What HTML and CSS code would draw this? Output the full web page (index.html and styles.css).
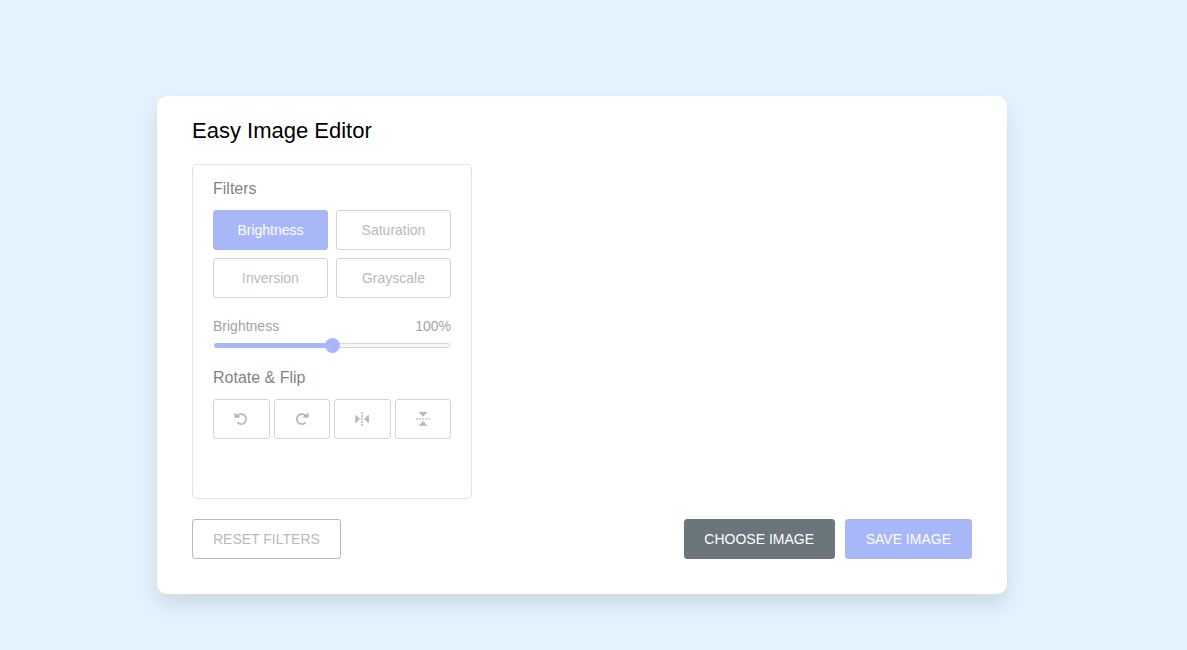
FILE: index.html
```html
<!DOCTYPE html>
<html lang="en">
<head>
<meta charset="utf-8">
<title>Easy Image Editor</title>
<link rel="stylesheet" href="styles.css">
</head>
<body>
<main class="container">
  <h2 class="heading">Easy Image Editor</h2>
  <section class="panel">
    <div class="panel-body">
      <h3 class="label">Filters</h3>
      <div class="filters">
        <button class="option active">Brightness</button>
        <button class="option">Saturation</button>
        <button class="option">Inversion</button>
        <button class="option">Grayscale</button>
      </div>
      <div class="slider">
        <div class="slider-info"><span>Brightness</span><span>100%</span></div>
        <input class="range" type="range" min="0" max="200" value="100" aria-label="Brightness">
      </div>
      <h3 class="label">Rotate &amp; Flip</h3>
      <div class="rotate">
        <button class="option" aria-label="Rotate left"><svg class="icon" viewBox="0 0 14 14"><path class="stroke" d="M3 4.3A5 5 0 1 1 3.4 10.4"/><path d="M.3 .6L2.2 2.2 4.4 2.6 6 5.8H.3z"/></svg></button>
        <button class="option" aria-label="Rotate right"><svg class="icon" viewBox="0 0 14 14"><path class="stroke" d="M11 4.3A5 5 0 1 0 10.6 10.4"/><path d="M13.7 .6L11.8 2.2 9.6 2.6 8 5.8h5.7z"/></svg></button>
        <button class="option" aria-label="Flip horizontally"><svg class="icon" viewBox="0 0 14 14"><path d="M.3 2.6L5 7 .3 11.4zM13.9 2.6L9.2 7l4.7 4.4zM6.3 0h1.5v2H6.3zM6.3 3h1.5v2H6.3zM6.3 6h1.5v2H6.3zM6.3 9h1.5v2H6.3zM6.3 12h1.5v2H6.3z"/></svg></button>
        <button class="option" aria-label="Flip vertically"><svg class="icon" viewBox="0 0 14 14"><path d="M2.6 .1h8.8L7 4.8zM2.6 13.7h8.8L7 9zM0 6.2h2v1.4H0zM3 6.2h2v1.4H3zM6 6.2h2v1.4H6zM9 6.2h2v1.4H9zM12 6.2h2v1.4h-2z"/></svg></button>
      </div>
    </div>
  </section>
  <footer class="controls">
    <button class="button reset">RESET FILTERS</button>
    <div class="actions">
      <button class="button choose">CHOOSE IMAGE</button>
      <button class="button save">SAVE IMAGE</button>
    </div>
  </footer>
</main>
</body>
</html>
```
FILE: styles.css
```css
* {
  margin: 0;
  padding: 0;
  box-sizing: border-box;
  font-family: "Liberation Sans", Arial, sans-serif;
}

body {
  min-height: 650px;
  padding: 96px 0 0 157px;
  background: #e3f2fd;
}

.container {
  width: 850px;
  padding: 22px 35px 35px;
  border-radius: 10px;
  background: #fff;
  box-shadow: 0 10px 20px rgba(0, 0, 0, 0.1);
}

.heading {
  margin-bottom: 21px;
  font-size: 22px;
  font-weight: 400;
  line-height: 25px;
}

.panel {
  width: 280px;
  height: 335px;
  padding: 15px 20px;
  border: 1px solid #e4e4e4;
  border-radius: 5px;
}

.panel-body {
  opacity: 0.5;
}

.label {
  margin-bottom: 12px;
  font-size: 16px;
  font-weight: 400;
  line-height: 18px;
}

.filters {
  display: grid;
  grid-template-columns: 1fr 1fr;
  gap: 8px;
}

.option {
  display: flex;
  align-items: center;
  justify-content: center;
  height: 40px;
  border: 1px solid #aaa;
  border-radius: 3px;
  background: #fff;
  color: #717578;
  font-size: 14px;
}

.option.active {
  border-color: #5372f0;
  background: #5372f0;
  color: #fff;
}

.slider {
  height: 51px;
  margin: 20px 0 0;
}

.slider-info {
  display: flex;
  justify-content: space-between;
  color: #464646;
  font-size: 14px;
  line-height: 16px;
}

.range {
  display: block;
  width: 236px;
  height: 5px;
  margin: 9px 1px 0;
  appearance: none;
  border-radius: 3px;
  background:
    linear-gradient(#5372f0, #5372f0) left / 50% 100% no-repeat,
    linear-gradient(#b2b2b2, #b2b2b2) right / 1px 100% no-repeat,
    linear-gradient(#b2b2b2 1px, #efefef 1px, #efefef 4px, #b2b2b2 4px);
}

.range::-webkit-slider-thumb {
  width: 15px;
  height: 15px;
  appearance: none;
  border-radius: 50%;
  background: #5372f0;
}

.rotate {
  display: grid;
  grid-template-columns: repeat(4, 1fr);
  gap: 4px;
}

.icon {
  width: 14px;
  height: 14px;
  fill: #717578;
}

.stroke {
  fill: none;
  stroke: #717578;
  stroke-width: 1.8;
}

.controls {
  display: flex;
  justify-content: space-between;
  margin-top: 20px;
}

.actions {
  display: flex;
  gap: 10px;
}

.button {
  height: 40px;
  padding: 0 20px;
  border: 1px solid transparent;
  border-radius: 3px;
  color: #fff;
  font-size: 14px;
}

.reset {
  border-color: #6c757d;
  background: #fff;
  color: #717578;
  opacity: 0.5;
}

.choose {
  width: 151px;
  padding: 0 19px;
  border-color: #6b757c;
  background: #6b757c;
}

.save {
  border-color: #5372f0;
  background: #5372f0;
  opacity: 0.5;
}
```
